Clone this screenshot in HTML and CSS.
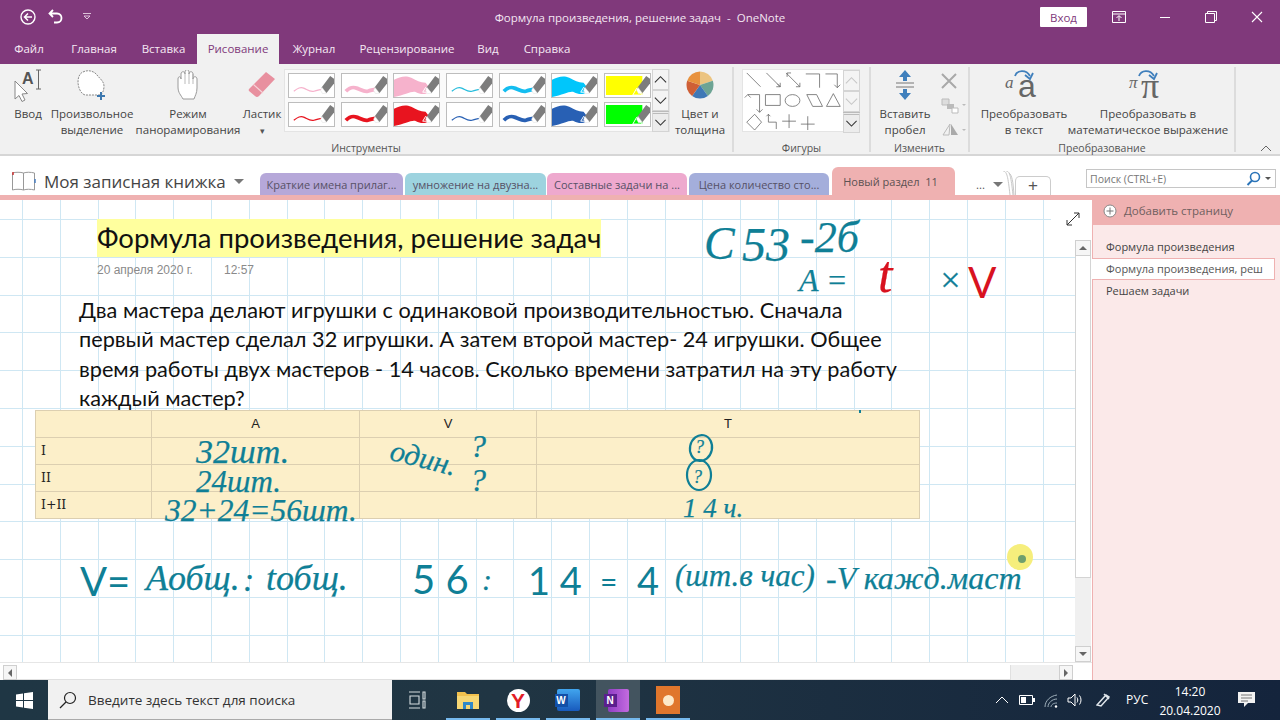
FILE: index.html
```html
<!DOCTYPE html>
<html lang="ru">
<head>
<meta charset="utf-8">
<title>Формула произведения, решение задач - OneNote</title>
<link rel="stylesheet" href="styles.css">
</head>
<body>
<svg class="defs" aria-hidden="true">
  <defs>
    <symbol id="nib" viewBox="0 0 47 24"><path d="M34 14 43 2l4 3v5l-8 10z" fill="#7d7d7d"/><path d="M33 17l1.500-3 4.500 6-4 .5z" fill="#fff" stroke="#ddd" stroke-width=".5"/></symbol>
    <symbol id="pen-thin" viewBox="0 0 47 24"><path d="M5 18c4-3 7-5 11-3s6 4 10 3 6-2 9-2" fill="none" stroke="currentColor" stroke-width="1.300"/><use href="#nib"/></symbol>
    <symbol id="pen-mid" viewBox="0 0 47 24"><path d="M4 18c4-4 7-5 12-3s7 4 11 3 6-2 8-2" fill="none" stroke="currentColor" stroke-width="4"/><use href="#nib"/></symbol>
    <symbol id="pen-thick" viewBox="0 0 47 24"><path d="M0 6c6-3 12-5 18-2s9 5 15 5l3 4v6c-4 3-9 2-13 0S12 22 0 24z" fill="currentColor"/><use href="#nib"/><path d="M30 19l3-5 5 5z" fill="none" stroke="#fff" stroke-width="1"/></symbol>
    <symbol id="pen-hl" viewBox="0 0 47 24"><path d="M1 2h38v20H1z" fill="currentColor"/><use href="#nib"/><path d="M29 22l4-7 6 7z" fill="none" stroke="#fff" stroke-width="1"/></symbol>
    <symbol id="chev-up" viewBox="0 0 16 20"><path d="M2 13 8 7l6 6" fill="none" stroke="currentColor" stroke-width="1.200"/></symbol>
    <symbol id="chev-down" viewBox="0 0 16 20"><path d="M2 7l6 6 6-6" fill="none" stroke="currentColor" stroke-width="1.200"/></symbol>
  </defs>
</svg>

<div class="app">
  <header class="titlebar">
    <div class="qat">
      <svg class="qat-icon" viewBox="0 0 18 18"><circle cx="9" cy="9" r="7" fill="none" stroke="#fff" stroke-width="1.400"/><path d="M13 9H6m3-3.500L5.500 9 9 12.500" fill="none" stroke="#fff" stroke-width="1.500"/></svg>
      <svg class="qat-icon" viewBox="0 0 18 18"><path d="M6 2 2.500 5.500 6 9M3 5.500h7c6 0 6 9 0 9H7" fill="none" stroke="#fff" stroke-width="1.800"/></svg>
      <svg class="qat-small" viewBox="0 0 10 10"><path d="M1 1.500h8M2 4l3 3 3-3z" fill="none" stroke="#e6cfe4" stroke-width=".9"/></svg>
    </div>
    <div class="doc-title">Формула произведения, решение задач&nbsp; -&nbsp; OneNote</div>
    <div class="win">
      <button class="signin">Вход</button>
      <span class="win-btn"><svg viewBox="0 0 14 12" width="14" height="12"><path d="M.5.500h13v11H.500zM.5 3h13M7 10V5M4.500 7 7 4.500 9.500 7" fill="none" stroke="#fff" stroke-width="1"/></svg></span>
      <span class="win-btn"><svg viewBox="0 0 12 12" width="12" height="12"><path d="M1 6.500h10" stroke="#fff" stroke-width="1"/></svg></span>
      <span class="win-btn"><svg viewBox="0 0 12 12" width="12" height="12"><path d="M.5 2.500h9v9h-9zM2.500 2.500v-2h9v9h-2" fill="none" stroke="#fff" stroke-width="1"/></svg></span>
      <span class="win-btn"><svg viewBox="0 0 12 12" width="12" height="12"><path d="m1 1 10 10M11 1 1 11" stroke="#fff" stroke-width="1.100"/></svg></span>
    </div>
  </header>

  <nav class="tabs">
    <span class="tab t-file">Файл</span>
    <span class="tab t-home">Главная</span>
    <span class="tab t-ins">Вставка</span>
    <span class="tab t-draw active">Рисование</span>
    <span class="tab t-log">Журнал</span>
    <span class="tab t-rev">Рецензирование</span>
    <span class="tab t-view">Вид</span>
    <span class="tab t-help">Справка</span>
  </nav>

  <section class="ribbon">
    <div class="group g-tools">
      <div class="group-body">
        <div class="rbtn b-input">
          <div class="ricon input-icon">
            <span class="input-a">A</span>
            <svg class="abs-fill" viewBox="0 0 32 39"><path d="M3 14v18l4-3.500 3 6 3-1.500-3-6 5.500-.5z" fill="#fff" stroke="#888" stroke-width="1"/><path d="M24 3h5M26.500 3v19M24 22h5" fill="none" stroke="#666" stroke-width="1"/></svg>
          </div>
          <div class="rlabel">Ввод</div>
        </div>
        <div class="rbtn b-free">
          <div class="ricon"><svg width="30" height="30" viewBox="0 0 30 30"><path d="M6 2c6-3 12 0 14 3s7 6 7 11-2 9-5 9H9C4 25 1 17 1 12S3 3 6 2z" fill="#fff" stroke="#888" stroke-width="1" stroke-dasharray="2 1"/><path d="M24 22v8M20 26h8" stroke="#3c77ae" stroke-width="2"/></svg></div>
          <div class="rlabel">Произвольное<br>выделение</div>
        </div>
        <div class="rbtn b-pan">
          <div class="ricon"><svg width="22" height="30" viewBox="0 0 22 30"><path d="M6 29c-2-4-5-6-5-12V9c0-3 3-3 3 0V4c0-3 4-3 4 0V2c0-3 4-3 4 0v2c0-3 4-3 4 0v5c0-3 4-3 4 0v9c0 5-2 8-3 11z" fill="#fff" stroke="#9a9a9a" stroke-width="1"/><path d="M8 4v10M12 3v11M16 4v10" stroke="#aaa" stroke-width=".8"/></svg></div>
          <div class="rlabel">Режим<br>панорамирования</div>
        </div>
        <div class="rbtn b-erase">
          <div class="ricon"><svg width="28" height="28" viewBox="0 0 28 28"><path d="M1 18 18 1l9 7-16 17a3 3 0 0 1-4 0l-6-5a2 2 0 0 1 0-2z" fill="#e8909f"/><path d="M5.500 13.500 15 22" stroke="#f6d6da" stroke-width="1.200"/></svg></div>
          <div class="rlabel">Ластик<br><span class="caret">▾</span></div>
        </div>
        <div class="gallery pens">
          <div class="pen-grid">
            <svg class="pen c-pink"><use href="#pen-thin"/></svg>
            <svg class="pen c-pink"><use href="#pen-mid"/></svg>
            <svg class="pen c-pink"><use href="#pen-thick"/></svg>
            <svg class="pen c-cyan1"><use href="#pen-thin"/></svg>
            <svg class="pen c-cyan2"><use href="#pen-mid"/></svg>
            <svg class="pen c-cyan3"><use href="#pen-thick"/></svg>
            <svg class="pen c-yellow"><use href="#pen-hl"/></svg>
            <svg class="pen c-red"><use href="#pen-thin"/></svg>
            <svg class="pen c-red"><use href="#pen-mid"/></svg>
            <svg class="pen c-red"><use href="#pen-thick"/></svg>
            <svg class="pen c-blue"><use href="#pen-thin"/></svg>
            <svg class="pen c-blue"><use href="#pen-mid"/></svg>
            <svg class="pen c-blue"><use href="#pen-thick"/></svg>
            <svg class="pen c-green"><use href="#pen-hl"/></svg>
          </div>
          <div class="gal-scroll">
            <svg class="gs"><use href="#chev-up"/></svg>
            <svg class="gs"><use href="#chev-down"/></svg>
            <svg class="gs gs-more"><use href="#chev-down"/></svg>
          </div>
        </div>
        <div class="rbtn b-color">
          <div class="ricon"><svg width="28" height="28" viewBox="-14 -14 28 28"><path d="M0 0V-13.500A13.500 13.500 0 0 1 12.800-4.200z" fill="#ecc480"/><path d="M0 0 12.800-4.200A13.500 13.500 0 0 1 7.900 10.900z" fill="#6da494"/><path d="M0 0 7.900 10.900A13.500 13.500 0 0 1-7.900 10.900z" fill="#3f78b6"/><path d="M0 0-7.900 10.900A13.500 13.500 0 0 1-12.800-4.200z" fill="#cf5f36"/><path d="M0 0-12.800-4.200A13.500 13.500 0 0 1 0-13.500z" fill="#e8923e"/></svg></div>
          <div class="rlabel">Цвет и<br>толщина</div>
        </div>
      </div>
      <div class="group-label">Инструменты</div>
    </div>

    <div class="group g-shapes">
      <div class="group-body">
        <div class="gallery shapes">
          <svg class="shape-grid" viewBox="0 0 100 62">
            <g fill="none" stroke="#666" stroke-width=".8">
              <path d="M3 3l14 14M23 3l14 14M34 14l3 3m-4 0h4v-4M43 3l14 14M44 7V3h4M53 17h4v-4M63 4h14v14M83 4h12v14M92 15l3 3 3-3"/>
              <path d="M16 25H4M16 25v18M1 28l3-3 3 3M13 40l3 3 3-3M22 25h15v11H22zM57 31a7.500 6 0 1 1-15 0 7.500 6 0 1 1 15 0zM64 25h10l6 12H70zM91 24l7 13H84z"/>
              <path d="M11 45l7 8-7 8-8-8zM25 45v8h8v7M25 45l-2 2m2-2 2 2M46 45v14M39 52h14M65 47v14M58 55h14"/>
            </g>
          </svg>
          <div class="gal-scroll">
            <svg class="gs gs-off"><use href="#chev-up"/></svg>
            <svg class="gs gs-off"><use href="#chev-down"/></svg>
            <svg class="gs gs-more"><use href="#chev-down"/></svg>
          </div>
        </div>
      </div>
      <div class="group-label">Фигуры</div>
    </div>

    <div class="group g-edit">
      <div class="group-body">
        <div class="rbtn b-space">
          <div class="ricon"><svg width="20" height="32" viewBox="0 0 20 32"><path d="M10 1 4 8h4v4h4V8h4zM10 31l-6-7h4v-4h4v4h4z" fill="#3f7fbc"/><path d="M1 14h18M1 18h18" stroke="#777" stroke-width="1"/></svg></div>
          <div class="rlabel">Вставить<br>пробел</div>
        </div>
        <div class="edit-side">
          <svg width="16" height="16" viewBox="0 0 16 16"><path d="m1 1 14 14M15 1 1 15" stroke="#a9a9a9" stroke-width="2"/></svg>
          <svg width="26" height="16" viewBox="0 0 26 16"><path d="M1 1h7v6H1z" fill="#ddd" stroke="#bbb"/><path d="M6 6h7v5H6z" fill="#bbb"/><path d="M11 10h6v5h-6z" fill="#fff" stroke="#bbb"/><path d="m21 6 2 2 2-2z" fill="#bbb"/></svg>
          <svg width="26" height="14" viewBox="0 0 26 14"><path d="M9 1 2 12h6z" fill="none" stroke="#bbb"/><path d="M10 1l7 11h-7z" fill="#aaa"/><path d="m21 6 2 2 2-2z" fill="#bbb"/></svg>
        </div>
      </div>
      <div class="group-label">Изменить</div>
    </div>

    <div class="group g-conv">
      <div class="group-body">
        <div class="rbtn b-totext">
          <div class="ricon conv-icon">
            <span class="conv-small">a</span><span class="conv-big">a</span>
            <svg class="abs-fill" viewBox="0 0 40 39"><path d="M11 9c2-6 11-7 15 0" fill="none" stroke="#3f7fbc" stroke-width="1.800"/><path d="m21 8 5 4 3-6" fill="none" stroke="#3f7fbc" stroke-width="1.800"/></svg>
          </div>
          <div class="rlabel">Преобразовать<br>в текст</div>
        </div>
        <div class="rbtn b-tomath">
          <div class="ricon conv-icon">
            <span class="conv-small pi">π</span><span class="conv-big pi">π</span>
            <svg class="abs-fill" viewBox="0 0 40 39"><path d="M11 9c2-6 11-7 15 0" fill="none" stroke="#3f7fbc" stroke-width="1.800"/><path d="m21 8 5 4 3-6" fill="none" stroke="#3f7fbc" stroke-width="1.800"/></svg>
          </div>
          <div class="rlabel">Преобразовать в<br>математическое выражение</div>
        </div>
      </div>
      <div class="group-label">Преобразование</div>
    </div>

    <div class="collapse"><svg width="12" height="7" viewBox="0 0 12 7"><path d="M1 6l5-5 5 5" fill="none" stroke="#666" stroke-width="1"/></svg></div>
  </section>

  <div class="sections">
    <div class="notebook">
      <svg width="24" height="20" viewBox="0 0 24 20"><path d="M.5 2c3-1 8-1 11 0v17c-3-1-8-1-11 0zM11.500 2c3-1 7-1 11 0v17c-4-1-8-1-11 0z" fill="#fff" stroke="#999"/><path d="M1 1v3" stroke="#c33" stroke-width="1.500"/><path d="M23 8v4" stroke="#4a7fc0" stroke-width="1.500"/></svg>
      <span class="nb-name">Моя записная книжка</span>
      <span class="tri"></span>
    </div>
    <div class="sec-tabs">
      <span class="sec s1">Краткие имена прилаг...</span>
      <span class="sec s2">умножение на двузна...</span>
      <span class="sec s3">Составные задачи на ...</span>
      <span class="sec s4">Цена количество сто...</span>
      <span class="sec s5">Новый раздел&nbsp; 11</span>
      <span class="more">...<span class="tri"></span></span>
      <svg class="stack" width="12" height="24" viewBox="0 0 12 24"><path d="M0 0c4 0 5 6 7 24M3 0c4 0 5 6 7 24M6 2c3 2 4 8 5 22" fill="none" stroke="#c8c8c8"/></svg>
      <span class="add-sec">+</span>
    </div>
    <div class="search">
      <span class="search-text">Поиск (CTRL+E)</span>
      <svg width="15" height="15" viewBox="0 0 15 15"><circle cx="9" cy="6" r="4.500" fill="none" stroke="#2b74b8" stroke-width="1.600"/><path d="M6 9.500 1.500 14" stroke="#2b74b8" stroke-width="2"/></svg>
      <span class="tri tri-small"></span>
    </div>
  </div>
  <div class="stripe"></div>

  <main class="main">
    <div class="canvas">
      <div class="canvas-row">
        <div class="sheet">
          <h1 class="page-title">Формула произведения, решение задач</h1>
          <div class="page-date"><span class="date-d">20 апреля 2020 г.</span><span>12:57</span></div>
          <p class="task">Два мастера делают игрушки с одинаковой производительностью. Сначала<br>первый мастер сделал 32 игрушки. А затем второй мастер- 24 игрушки. Общее<br>время работы двух мастеров - 14 часов. Сколько времени затратил на эту работу<br>каждый мастер?</p>
          <table class="grid-table">
            <colgroup><col class="c1"><col class="c2"><col class="c3"><col class="c4"></colgroup>
            <tr class="hd"><td></td><td>A</td><td>V</td><td>T</td></tr>
            <tr><td class="rn">I</td><td></td><td></td><td></td></tr>
            <tr><td class="rn">II</td><td></td><td></td><td></td></tr>
            <tr><td class="rn">I+II</td><td></td><td></td><td></td></tr>
          </table>

          <span class="ink i-c">С</span>
          <span class="ink i-53">53</span>
          <span class="ink i-26">-2б</span>
          <span class="ink i-a">A =</span>
          <span class="ink red i-t">t</span>
          <span class="ink i-x">×</span>
          <span class="ink red i-v">V</span>
          <span class="ink i-32">32шт.</span>
          <span class="ink i-24">24шт.</span>
          <span class="ink i-sum">32+24=56шт.</span>
          <span class="ink i-odin">один.</span>
          <span class="ink i-q1">?</span>
          <span class="ink i-q2">?</span>
          <span class="ink i-q3">?</span>
          <span class="ink i-q4">?</span>
          <svg class="ink-rings" width="40" height="64" viewBox="0 0 40 64"><ellipse cx="21" cy="15" rx="11" ry="13" transform="rotate(12 21 15)" fill="none" stroke="#0f7f96" stroke-width="2.200"/><ellipse cx="19" cy="42" rx="12" ry="15" fill="none" stroke="#0f7f96" stroke-width="2.200"/></svg>
          <span class="ink i-14">1 4 ч.</span>
          <span class="ink ink-plain i-vf">V=</span>
          <span class="ink i-af">Aобщ.</span>
          <span class="ink i-col">:</span>
          <span class="ink i-tf">tобщ.</span>
          <span class="ink ink-plain i-56">5 6</span>
          <span class="ink i-col2">:</span>
          <span class="ink ink-plain i-144">1 4</span>
          <span class="ink ink-plain i-eq">=</span>
          <span class="ink ink-plain i-4">4</span>
          <span class="ink i-par">(шт.в час)</span>
          <span class="ink i-vk">-V кажд.маст</span>
          <span class="ink-dot"></span>
          <span class="pointer"><span class="pointer-dot"></span></span>
        </div>
        <div class="vscroll">
          <span class="expand"><svg width="14" height="14" viewBox="0 0 14 14"><path d="M1 13 13 1M8 1h5v5M1 8v5h5" fill="none" stroke="#333" stroke-width="1"/></svg></span>
          <span class="sb-btn"><span class="arr-up"></span></span>
          <span class="v-thumb"></span>
          <span class="v-track"></span>
          <span class="sb-btn"><span class="arr-down"></span></span>
        </div>
      </div>
      <div class="hscroll">
        <span class="sb-btn sb-h"><span class="arr-left"></span></span>
        <span class="h-thumb"></span>
        <span class="h-track"></span>
        <span class="sb-btn sb-h"><span class="arr-right"></span></span>
        <span class="h-corner"></span>
      </div>
    </div>

    <aside class="pages">
      <div class="add-page">
        <svg width="14" height="14" viewBox="0 0 14 14"><circle cx="7" cy="7" r="6" fill="#fff" stroke="#888"/><path d="M7 3.500v7M3.500 7h7" stroke="#777"/></svg>
        <span>Добавить страницу</span>
      </div>
      <ul class="page-list">
        <li>Формула произведения</li>
        <li class="current">Формула произведения, реш</li>
        <li>Решаем задачи</li>
      </ul>
    </aside>
  </main>

  <footer class="taskbar">
    <div class="start"><svg width="17" height="17" viewBox="0 0 17 17"><path d="M0 2.500 7 1.500v6.500H0zM8 1.300 17 0v8H8zM0 9h7v6.500l-7-1zM8 9h9v8l-9-1.300z" fill="#fff"/></svg></div>
    <div class="tb-search">
      <svg width="18" height="18" viewBox="0 0 18 18"><circle cx="11" cy="7" r="5.500" fill="none" stroke="#222" stroke-width="1.200"/><path d="M7 11 1 17" stroke="#222" stroke-width="1.200"/></svg>
      <span>Введите здесь текст для поиска</span>
    </div>
    <div class="taskview"><svg width="18" height="18" viewBox="0 0 18 18"><path d="M0 1h11M0 17h11M1 5h9v8H1zM14 1h2v7h-2zM14 10h2v7h-2z" fill="none" stroke="#d5dde0" stroke-width="1.100"/></svg></div>
    <div class="apps">
      <span class="app-btn run"><svg width="22" height="22" viewBox="0 0 22 22"><path d="M0 3h8l2 2h12v15H0z" fill="#f2c14e"/><path d="M0 7h22v13H0z" fill="#f7d774"/><path d="M6 13h10v7H6z" fill="#2f87c8"/><path d="M9 16h4v4H9z" fill="#f7d774"/></svg></span>
      <span class="app-btn run"><span class="yandex">Y</span></span>
      <span class="app-btn run"><span class="word"><span class="word-w">W</span></span></span>
      <span class="app-btn run on"><span class="onenote"><span class="one-n">N</span></span></span>
      <span class="app-btn run"><span class="ocam"><span class="ocam-dot"></span></span></span>
    </div>
    <div class="tray">
      <svg class="t-chev" width="14" height="8" viewBox="0 0 14 8"><path d="m1 7 6-6 6 6" fill="none" stroke="#fff" stroke-width="1"/></svg>
      <svg class="t-bat" width="16" height="10" viewBox="0 0 16 10"><path d="M.5.500h13v9H.500z" fill="none" stroke="#fff"/><path d="M2 2h5v6H2z" fill="#fff"/><path d="M14 3h2v4h-2z" fill="#fff"/></svg>
      <svg class="t-wifi" width="14" height="14" viewBox="0 0 14 14"><path d="M1 13C1 7 6 2 13 1M4 13c0-4 4-8 9-8M7 13c0-2 2-4 6-4" fill="none" stroke="#9fb0bb" stroke-width="1"/><circle cx="12" cy="12.500" r="1.200" fill="#fff"/></svg>
      <svg class="t-vol" width="16" height="14" viewBox="0 0 16 14"><path d="M1 5h3l4-4v12L4 9H1zM10 4.500c1 1.500 1 3.500 0 5M12.500 2.500c2 2.500 2 6.500 0 9" fill="none" stroke="#fff" stroke-width="1"/></svg>
      <svg class="t-pen" width="14" height="14" viewBox="0 0 14 14"><path d="M1 12 10 2l3 2-8 9zM8 1l5 5" fill="none" stroke="#dfe5ea" stroke-width="1.500"/></svg>
      <span class="t-lang">РУС</span>
      <span class="t-clock">14:20<br>20.04.2020</span>
      <svg class="t-note" width="18" height="16" viewBox="0 0 18 16"><path d="M0 0h17v11H10l-4 4v-4H0z" fill="#f2f2f2"/><path d="M3 3h11M3 6h11M3 9h7" stroke="#555" stroke-width=".8"/></svg>
    </div>
  </footer>
</div>
</body>
</html>
```
FILE: styles.css
```css
* { box-sizing: border-box; }
html, body { margin: 0; height: 100%; overflow: hidden; }
body { font-family: "Open Sans", "Noto Sans", sans-serif; font-size: 11.5px; color: #444; background: #fff; }
.defs { position: absolute; width: 0; height: 0; }
.app { width: 1280px; height: 720px; display: flex; flex-direction: column; }

/* Title bar */
.titlebar { height: 34px; flex: none; background: #80397b; display: flex; align-items: center; position: relative; color: #fff; }
.qat { display: flex; align-items: center; padding-left: 19px; gap: 10px; }
.qat-icon { width: 18px; height: 18px; }
.qat-small { width: 10px; height: 10px; margin-left: 7px; }
.doc-title { position: absolute; left: 0; right: 0; text-align: center; font-size: 11.5px; color: #f3e6f2; }
.win { margin-left: auto; display: flex; align-items: center; position: relative; }
.signin { width: 47px; height: 20px; background: #fff; border: 0; border-radius: 1px; color: #80397b; font: 11.5px "Open Sans", sans-serif; padding: 0; margin-right: 9px; }
.win-btn { width: 46px; height: 34px; display: flex; align-items: center; justify-content: center; }

/* Ribbon tabs */
.tabs { height: 30px; flex: none; background: #80397b; display: flex; color: #f5e9f4; }
.tab { display: flex; align-items: center; justify-content: center; font-size: 11.5px; padding-bottom: 1px; }
.t-file { width: 58px; } .t-home { width: 72px; } .t-ins { width: 67px; } .t-draw { width: 82px; }
.t-log { width: 70px; } .t-rev { width: 116px; } .t-view { width: 46px; } .t-help { width: 72px; }
.tab.active { background: #f1f1f1; color: #80397b; }

/* Ribbon */
.ribbon { height: 92px; flex: none; background: #f1f1f1; border-bottom: 2px solid #d6d6d6; display: flex; padding-top: 3px; position: relative; }
.group { display: flex; flex-direction: column; height: 85px; border-right: 2px solid #dcdcdc; }
.g-tools { width: 734px; } .g-shapes { width: 137px; } .g-edit { width: 99px; } .g-conv { width: 266px; }
.group-body { flex: 1; display: flex; min-height: 0; }
.group-label { height: 16px; line-height: 16px; margin-bottom: -4px; text-align: center; font-size: 10.5px; color: #555; }
.rbtn { display: flex; flex-direction: column; align-items: center; flex: none; }
.ricon { height: 39px; padding-bottom: 3px; display: flex; align-items: center; justify-content: center; position: relative; }
.rlabel { text-align: center; line-height: 16px; font-size: 11.5px; color: #444; white-space: nowrap; }
.caret { font-size: 9px; color: #555; }
.abs-fill { position: absolute; inset: 0; width: 100%; height: 100%; }
.b-input { width: 40px; margin-left: 8px; }
.b-free { width: 84px; margin-left: 2px; }
.b-pan { width: 104px; margin-left: 2px; }
.b-erase { width: 40px; margin-left: 2px; }
.b-color { width: 60px; margin-left: 0; }
.input-icon { width: 32px; }
.input-a { position: absolute; left: 10px; top: 3px; font: bold 16px "Liberation Sans", sans-serif; color: #555; }

.gallery { display: flex; flex: none; height: 63px; background: #fafafa; border: 1px solid #e4e4e4; }
.pens { margin-left: 2px; width: 386px; padding: 3px 0 0 3px; justify-content: space-between; margin-top: 2px; }
.pen-grid { display: grid; grid-template-columns: repeat(7, 47px); grid-auto-rows: 25px; column-gap: 5.700px; row-gap: 4px; }
.pen { width: 47px; height: 25px; background: #fff; border: 1px solid #bdbdbd; }
.c-pink { color: #f6b2cc; } .c-cyan1 { color: #25bcdc; } .c-cyan2 { color: #14bdf0; } .c-cyan3 { color: #00c6fb; }
.c-yellow { color: #ffff00; } .c-red { color: #e8141f; } .c-blue { color: #2860b4; } .c-green { color: #00ff00; }
.gal-scroll { display: flex; flex-direction: column; width: 17px; margin-top: -4px; height: 63px; flex: none; }
.gs { width: 17px; height: 21px; color: #333; background: #f4f4f4; border: 1px solid #d4d4d4; }
.gs-off { color: #c8c8c8; }
.gs-more { border-top: 3px double #bbb; background: #ececec; }

.g-shapes .group-body { padding-left: 8px; }
.shapes { width: 118px; margin-top: 2px; background: #fff; }
.shape-grid { width: 100px; height: 61px; flex: none; }
.shapes .gal-scroll { margin: 0; }

.b-space { width: 68px; }
.edit-side { display: flex; flex-direction: column; align-items: flex-start; gap: 9px; padding: 6px 0 0 3px; margin-left: -1px; }

.b-totext { width: 88px; margin-left: 10px; }
.b-tomath { width: 160px; }
.conv-icon { width: 40px; }
.conv-big { position: absolute; left: 14px; top: -3px; font: 32px/44px "Liberation Sans", sans-serif; color: #666; }
.conv-small { position: absolute; left: 1px; top: 4px; font: italic 17px/24px "Liberation Serif", serif; color: #666; }
.pi.conv-big { font-family: "Liberation Serif", serif; font-size: 36px; left: 13px; }
.collapse { position: absolute; right: 8px; bottom: 2px; line-height: 0; }

/* Section bar */
.sections { height: 39px; flex: none; display: flex; background: #fff; position: relative; }
.notebook { width: 260px; flex: none; display: flex; align-items: center; padding: 11px 0 0 12px; }
.nb-name { font-size: 17px; color: #444; margin-left: 8px; white-space: nowrap; }
.tri { display: inline-block; width: 0; height: 0; border: 5px solid transparent; border-top: 5px solid #777; border-bottom: 0; margin-left: 8px; }
.tri-small { border-width: 3.500px; border-bottom: 0; border-top-color: #555; margin-left: 4px; }
.sec-tabs { display: flex; align-items: flex-end; flex: none; width: 793px; }
.sec { height: 22px; display: flex; align-items: center; justify-content: center; border-radius: 6px 6px 0 0; font-size: 11px; color: #565166; flex: none; white-space: nowrap; }
.s1 { width: 143px; background: #b6a8d9; margin-right: 2px; }
.s2 { width: 141px; background: #9dd3df; margin-right: 1px; }
.s3 { width: 140px; background: #eea9ce; margin-right: 2px; }
.s4 { width: 140px; background: #a4aedb; margin-right: 3px; }
.s5 { width: 123px; height: 28px; background: #efb1b1; color: #5c5252; padding-right: 6px; }
.more { width: 48px; height: 22px; display: flex; align-items: center; justify-content: flex-end; color: #555; }
.stack { flex: none; }
.add-sec { width: 36px; height: 19px; border: 1px solid #ccc; border-bottom: 0; border-radius: 5px 5px 0 0; text-align: center; font: 17px/18px "Liberation Sans", sans-serif; color: #555; }
.search { position: absolute; left: 1086px; top: 13px; width: 190px; height: 19px; border: 1px solid #c6c6c6; background: #fff; display: flex; align-items: center; padding: 0 4px 0 3px; }
.search-text { flex: 1; font-size: 10.5px; color: #777; }
.stripe { height: 5px; flex: none; background: #efb1b1; }

/* Main */
.main { flex: 1; display: flex; min-height: 0; }
.canvas { width: 1092px; flex: none; display: flex; flex-direction: column; }
.canvas-row { flex: 1; display: flex; min-height: 0; }
.sheet {
  flex: 1; position: relative; overflow: hidden; padding-top: 19px;
  background-color: #fff;
  background-image:
    repeating-linear-gradient(180deg, #cfe7f3 -18.800px, #cfe7f3 -17.800px, transparent -17.800px, transparent 19px),
    repeating-linear-gradient(90deg, #cfe7f3 -15.800px, #cfe7f3 -14.800px, transparent -14.800px, transparent 22px);
}
.page-title { display: inline-block; margin: 0 0 0 97px; height: 38px; background: #ffff9e; font: 400 27.500px/38px "Lato", sans-serif; color: #111; white-space: nowrap; }
.page-date { margin: 4px 0 0 97px; font: 12px/18px "Liberation Sans", sans-serif; color: #8a8a8a; display: flex; }
.date-d { width: 127px; }
.task { margin: 17px 0 0 79px; font: 21.700px/29.400px "Lato", sans-serif; color: #111; white-space: nowrap; }
.grid-table { margin: -4px 0 0 35px; width: 884px; table-layout: fixed; border-collapse: collapse; background: #fcefc9; position: relative; }
.c1 { width: 116px; } .c2 { width: 208px; } .c3 { width: 177px; } .c4 { width: 383px; }
.grid-table td { height: 27px; border: 1px solid #dccfb1; padding: 0 5px; font: 12.500px "DejaVu Serif", serif; color: #222; }
.grid-table .hd td { text-align: center; font: 13px "Liberation Sans", sans-serif; }

/* Ink strokes, free on the page */
.ink { position: absolute; font-family: "Liberation Serif", serif; font-style: italic; color: #0f7f96; line-height: .8; white-space: nowrap; -webkit-text-stroke: .25px currentColor; }
.ink-plain { font-family: "Lato", sans-serif; font-style: normal; -webkit-text-stroke: 0; }
.red { color: #d8121f; }
.i-c { left: 704px; top: 26px; font-size: 46px; }
.i-53 { left: 742px; top: 26px; font-size: 48px; }
.i-26 { left: 800px; top: 20px; font-size: 44px; }
.i-a { left: 799px; top: 68px; font-size: 32px; }
.i-t { left: 878px; top: 54px; font-size: 52px; }
.i-x { left: 938px; top: 66px; font-size: 36px; }
.i-v { left: 968px; top: 66px; font-size: 42px; font-family: "Lato", sans-serif; font-style: normal; -webkit-text-stroke: 0; }
.i-32 { left: 196px; top: 238px; font-size: 34px; }
.i-24 { left: 196px; top: 270px; font-size: 31px; }
.i-sum { left: 165px; top: 298px; font-size: 31.500px; }
.i-odin { left: 390px; top: 246px; font-size: 30px; transform: rotate(14deg); }
.i-q1 { left: 470px; top: 234px; font-size: 32px; }
.i-q2 { left: 470px; top: 268px; font-size: 32px; }
.i-q3 { left: 695px; top: 240px; font-size: 18px; }
.i-q4 { left: 693px; top: 270px; font-size: 18px; }
.ink-rings { position: absolute; left: 680px; top: 233px; }
.i-14 { left: 683px; top: 298px; font-size: 27px; }
.i-vf { left: 80px; top: 365px; font-size: 40px; }
.i-af { left: 146px; top: 364px; font-size: 36px; }
.i-col { left: 243px; top: 366px; font-size: 34px; }
.i-tf { left: 266px; top: 364px; font-size: 36px; }
.i-56 { left: 412px; top: 363px; font-size: 40px; }
.i-col2 { left: 482px; top: 368px; font-size: 30px; }
.i-144 { left: 528px; top: 365px; font-size: 38px; }
.i-eq { left: 600px; top: 369px; font-size: 30px; }
.i-4 { left: 637px; top: 365px; font-size: 38px; }
.i-par { left: 675px; top: 364px; font-size: 31px; }
.i-vk { left: 826px; top: 366px; font-size: 32px; }
.ink-dot { position: absolute; left: 859px; top: 210px; width: 2px; height: 3px; background: #0f7f96; }
.pointer { position: absolute; left: 1007px; top: 344px; width: 26px; height: 26px; border-radius: 50%; background: #f6ee7c; display: flex; align-items: center; justify-content: center; }
.pointer-dot { width: 8px; height: 8px; margin: 3px 0 0 3px; border-radius: 50%; background: #6f9f6d; }

/* Scrollbars */
.vscroll { width: 17px; flex: none; background: #fff; display: flex; flex-direction: column; padding-top: 40px; position: relative; }
.expand { position: absolute; right: 12px; top: 12px; line-height: 0; background: #fff; box-shadow: -9px 0 0 6px #fff; }
.sb-btn { height: 16px; width: 16px; flex: none; border: 1px solid #cfcfcf; background: #f6f6f6; display: flex; align-items: center; justify-content: center; }
.v-thumb { height: 322px; flex: none; width: 16px; background: #fff; border: 1px solid #d4d4d4; border-top: 0; }
.v-track { flex: 1; width: 16px; background: #f0f0f0; }
.arr-up, .arr-down { width: 0; height: 0; border: 4px solid transparent; }
.arr-up { border-bottom: 4px solid #666; border-top: 0; }
.arr-down { border-top: 4px solid #666; border-bottom: 0; }
.arr-left, .arr-right { width: 0; height: 0; border: 4px solid transparent; }
.arr-left { border-right: 4px solid #666; border-left: 0; }
.arr-right { border-left: 4px solid #666; border-right: 0; }
.hscroll { height: 18px; flex: none; display: flex; background: #fff; padding: 2px 0 0 3px; border-top: 1px solid #e6e6e6; }
.sb-h { height: 15px; width: 14px; }
.h-thumb { flex: 1; background: #fff; border: 1px solid #e0e0e0; border-width: 0 1px 1px 0; }
.h-track { width: 48px; background: #f0f0f0; }
.h-corner { width: 19px; }

/* Pages panel */
.pages { flex: 1; background: #fbe9e9; border-left: 1px solid #efb1b1; min-width: 0; }
.add-page { height: 25px; background: #efb1b1; display: flex; align-items: center; gap: 7px; padding: 0 0 4px 11px; font-size: 11.500px; color: #6f5f5f; margin-left: -1px; }
.page-list { list-style: none; margin: 11px 0 0; padding: 0; }
.page-list li { height: 22px; line-height: 22px; padding-left: 13px; font-size: 11px; color: #444; white-space: nowrap; overflow: hidden; }
.page-list .current { background: #fff; border: 1px solid #efb1b1; border-left: 0; width: 183px; margin-left: -1px; padding-left: 14px; line-height: 20px; color: #555; }

/* Taskbar */
.taskbar { height: 40px; flex: none; background: linear-gradient(90deg, #1f3644, #203543 40%, #14243c); display: flex; align-items: center; color: #fff; position: relative; }
.start { width: 48px; height: 40px; display: flex; align-items: center; justify-content: center; flex: none; }
.tb-search { width: 344px; height: 40px; flex: none; background: #f1f1f1; border-bottom: 1px solid #aaa; display: flex; align-items: center; padding-left: 11px; gap: 11px; font-size: 13.500px; color: #333; }
.taskview { width: 51px; display: flex; justify-content: center; flex: none; line-height: 0; }
.apps { display: flex; flex: none; }
.app-btn { width: 50px; height: 40px; display: flex; align-items: center; justify-content: center; flex: none; }
.app-btn.run { box-shadow: inset 0 -2px 0 #76b9ed; border-left: 3px solid transparent; border-right: 3px solid transparent; background-clip: padding-box; }
.app-btn.on { background-color: #43545f; }
.yandex { width: 23px; height: 23px; border-radius: 50%; background: #fff; color: #e21c25; font: bold 21px/23px "Liberation Sans", sans-serif; text-align: center; }
.word { width: 23px; height: 22px; background: linear-gradient(#41a5ee, #185abd); display: flex; align-items: center; border-radius: 2px; }
.word-w { width: 13px; height: 13px; background: #124fa8; font: bold 10px/13px "Liberation Sans", sans-serif; text-align: center; color: #fff; margin-left: -2px; }
.onenote { width: 21px; height: 23px; background: linear-gradient(90deg, #8f3dc4, #c46be0); display: flex; align-items: center; border-radius: 2px; }
.one-n { width: 13px; height: 13px; background: #5b1f8e; font: bold 10px/13px "Liberation Sans", sans-serif; text-align: center; color: #fff; margin-left: -4px; }
.ocam { width: 24px; height: 28px; background: #e0762c; display: flex; align-items: center; justify-content: center; flex: none; }
.ocam-dot { width: 11px; height: 11px; border-radius: 50%; background: #fde9c9; }
.tray { position: absolute; inset: 0; pointer-events: none; }
.tray > * { position: absolute; }
.t-chev { left: 995px; top: 16px; }
.t-bat { left: 1019px; top: 15px; }
.t-wifi { left: 1044px; top: 14px; }
.t-vol { left: 1067px; top: 13px; }
.t-pen { left: 1096px; top: 13px; }
.t-lang { left: 1126px; top: 12px; font-size: 12px; line-height: 16px; }
.t-clock { left: 1150px; top: 2px; width: 80px; text-align: center; font-size: 12px; line-height: 19px; }
.t-note { left: 1238px; top: 12px; }
```
